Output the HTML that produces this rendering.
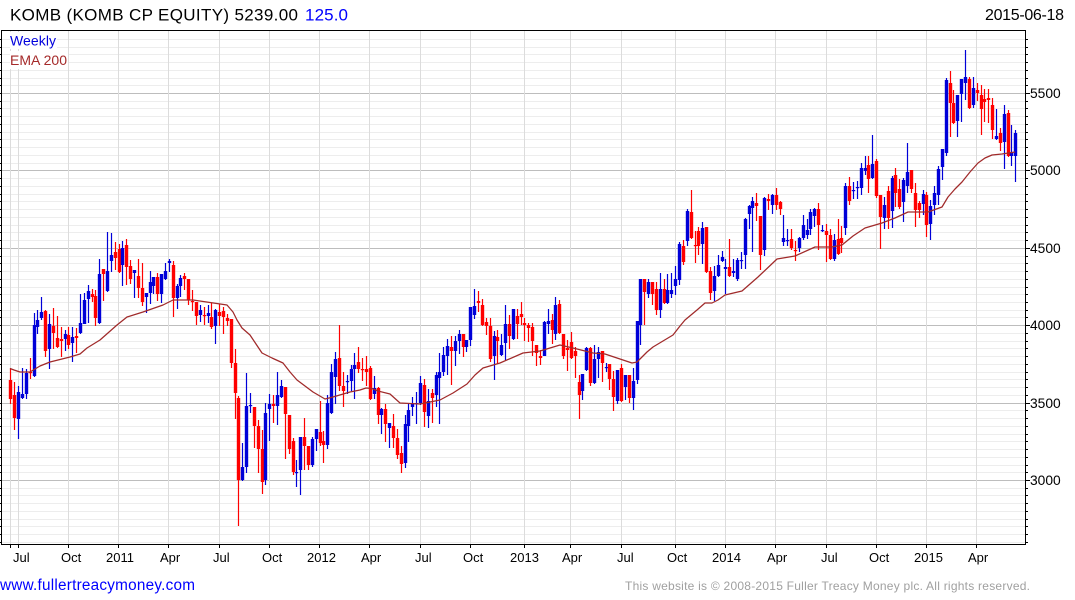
<!DOCTYPE html>
<html><head><meta charset="utf-8"><title>KOMB</title>
<style>
html,body{margin:0;padding:0;background:#fff;width:1075px;height:600px;overflow:hidden}
svg{display:block;position:absolute;left:0;top:0}
text{font-family:"Liberation Sans",Arial,sans-serif}
</style></head><body>
<svg id="s" xmlns="http://www.w3.org/2000/svg" width="1075" height="600" viewBox="0 0 1075 600">
<g id="grid"></g>
<g id="cand"></g>
<polyline fill="none" stroke="#a02a2a" stroke-width="1.25" stroke-linejoin="round" points="10,368.5 14,370 20,372 30,372 40,366 50,362 70,357 80,354 87,348 100,340 117,325 127,317 143,312 163,305 173,300 193,300 227,305 233,312 237,320 242,328 250,335 256,344 262,353 272,358 283,363 290,372 297,380 305,386 313,392 325,399 333,397 350,392 360,390 366,388 372,388.5 378,391 390,394 400,403 420,404 440,400 453,393 467,384 475,375 483,368 500,363 523,353 540,351 560,345 577,349 593,353 605,354 620,359 632,363 637,362 647,352 653,347 673,335 680,326 685,320 697,310 705,303 712,303 718,300 725,295 742,291 750,284 758,277 777,259 795,256 815,247 832,247 842,245 853,236 865,228 882,223 895,218 908,212 928,212 942,207 948,197 955,189 962,182 970,172 978,163 985,158 992,155 1002,154 1015,152"/>
<g id="frame" shape-rendering="crispEdges"></g>
<rect x="10" y="32" width="47" height="17" fill="#fff"/>
<rect x="10" y="51" width="58" height="18" fill="#fff"/>
<text x="10" y="45.5" font-size="14" fill="#0000dd" textLength="46">Weekly</text>
<text x="10" y="65" font-size="14" fill="#a52a2a" textLength="57">EMA 200</text>
<text x="10" y="20.5" font-size="17" fill="#000" textLength="288">KOMB (KOMB CP EQUITY) 5239.00</text>
<text x="305" y="20.5" font-size="17" fill="#0000ff" textLength="43">125.0</text>
<text x="985" y="20" font-size="16" fill="#000" textLength="79">2015-06-18</text>
<g font-size="13.8" fill="#000">
<text x="1030" y="98">5500</text><text x="1030" y="175">5000</text><text x="1030" y="253">4500</text><text x="1030" y="330">4000</text><text x="1030" y="408">3500</text><text x="1030" y="485">3000</text>
</g>
<g font-size="13" fill="#000">
<text x="13" y="562">Jul</text><text x="61" y="562">Oct</text><text x="106" y="562">2011</text><text x="160" y="562">Apr</text><text x="213" y="562">Jul</text><text x="262" y="562">Oct</text><text x="307" y="562">2012</text><text x="361" y="562">Apr</text><text x="415" y="562">Jul</text><text x="463" y="562">Oct</text><text x="510" y="562">2013</text><text x="562" y="562">Apr</text><text x="617" y="562">Jul</text><text x="667" y="562">Oct</text><text x="712" y="562">2014</text><text x="767" y="562">Apr</text><text x="821" y="562">Jul</text><text x="869" y="562">Oct</text><text x="914" y="562">2015</text><text x="968" y="562">Apr</text>
</g>
<text x="0" y="590" font-size="15.3" fill="#0000ff" textLength="195">www.fullertreacymoney.com</text>
<text x="625" y="590" font-size="12" fill="#a0a0a0" textLength="405">This website is © 2008-2015 Fuller Treacy Money plc. All rights reserved.</text>
</svg>
<script>
var NS="http://www.w3.org/2000/svg";
function R(p,x,y,w,h,c){var r=document.createElementNS(NS,"rect");r.setAttribute("x",x);r.setAttribute("y",y);r.setAttribute("width",w);r.setAttribute("height",h);r.setAttribute("fill",c);p.appendChild(r);}
var g=document.getElementById("grid"),f=document.getElementById("frame"),c=document.getElementById("cand");
var L=1,T=30,Rr=1025,B=544,k,y;
var minor=[];
for(k=-7;k<=58;k++){y=Math.round(93+k*7.74);minor.push(y);R(g,L,y,Rr-L,1,"#ededed");}
[93,170,248,325,403,480].forEach(function(y){R(g,L,y,Rr-L,1,"#bdbdbd");});
var vx=[10,18,68,118,168,219,269,319,369,420,470,524,570,621,675,725,775,826,876,926,976];
vx.forEach(function(x){R(g,x,T,1,B-T,"#dcdcdc");R(f,x,B,1,4,"#000");});
minor.forEach(function(y){R(f,0,y,1,1,"#000");R(f,Rr,y,3,1,"#000");});
[93,170,248,325,403,480].forEach(function(y){R(f,Rr,y,5,1,"#000");});
R(f,1,T,Rr-1,1,"#000");R(f,1,B,Rr-1,1,"#000");R(f,1,T,1,B-T+1,"#000");R(f,Rr,T,1,B-T+1,"#000");
var d="r368,380,399,404 r382,395,418,430 b386,392,419,439 b368,394,398,399 b369,373,394,399 r358,372,373,379 b313,325,376,377 b310,320,327,334 b297,312,318,320 r310,311,351,357 b314,324,349,369 r308,326,333,349 r316,338,347,348 r327,339,341,357 b330,334,339,351 r327,335,345,349 b327,337,343,362 r328,336,338,353 b294,323,333,334 b293,300,324,324 b285,291,299,323 r289,294,297,302 r290,296,318,326 b259,274,323,324 r269,269,274,301 b232,271,291,292 b233,255,261,272 r242,252,258,270 r244,249,272,273 b241,248,265,286 r239,245,267,285 r260,266,279,284 b270,270,273,298 r259,276,288,298 r263,288,302,306 b293,293,297,313 b271,282,293,304 b277,277,286,294 r273,277,294,301 b274,274,294,303 b263,271,279,280 b259,261,263,272 r261,265,298,317 b284,286,298,309 b275,278,286,297 r273,276,279,290 r279,279,300,305 r290,301,302,311 r302,302,316,325 b305,310,315,322 r307,315,316,325 b305,313,316,323 r303,317,327,329 b309,310,326,344 r304,312,316,326 r307,311,317,334 r314,318,321,326 r319,319,363,368 r349,363,393,419 r396,398,480,526 b443,467,480,481 b373,406,467,473 b393,405,406,413 r407,407,426,448 r420,426,449,473 r430,449,482,494 b403,413,480,485 b394,404,409,441 r395,404,406,423 b372,395,406,425 b380,386,397,398 r387,387,414,459 r415,415,449,454 r438,441,472,475 b460,472,473,487 b437,437,470,495 r418,437,446,470 r446,446,465,470 b437,439,465,467 b429,429,439,451 r401,432,443,446 r431,441,445,463 b395,403,445,449 b364,372,413,414 b352,359,377,404 r325,358,386,391 r372,386,391,407 b375,381,382,394 b365,369,381,391 b353,365,369,399 r347,362,369,373 r358,369,370,381 r356,369,372,386 r366,368,399,400 b376,388,394,399 r387,388,415,424 b408,409,415,434 r404,409,424,442 b423,423,428,448 r414,426,438,448 r429,438,455,459 r446,453,464,473 b415,424,463,468 b404,410,426,442 b397,403,407,416 b392,403,404,424 b376,383,403,405 r379,385,412,427 b389,401,416,428 r389,393,398,423 b372,375,395,407 b353,372,378,424 b347,355,372,376 b339,346,356,375 r336,347,351,385 b336,341,351,366 b330,334,341,354 r334,334,347,357 b340,340,347,352 b307,307,340,346 b289,306,315,319 r291,301,303,312 r299,305,325,326 r318,322,326,335 r318,326,359,362 b331,336,356,380 r330,337,341,364 b334,345,355,356 b305,324,343,360 r315,324,336,349 b309,309,339,340 r309,316,324,339 r302,314,317,325 r318,323,325,341 r323,325,328,342 r323,327,341,356 r345,345,353,366 r350,356,358,365 b321,322,356,356 b309,321,324,334 r314,320,330,344 b297,305,334,340 r300,304,333,334 r334,334,356,359 r340,348,350,371 r332,342,358,359 r347,351,356,378 r375,382,395,419 b374,374,391,400 b347,348,370,371 r347,348,383,386 b345,359,383,384 b347,352,359,378 r351,351,363,382 b363,367,368,372 r364,364,379,390 r371,379,397,411 b370,370,401,404 r364,368,401,402 b375,375,387,400 r375,375,398,403 b368,381,398,410 b321,321,380,384 b279,279,325,345 r279,279,292,325 b279,282,294,298 r282,282,294,305 r282,289,310,315 b273,289,310,318 r279,289,303,304 b274,290,303,304 b273,290,294,298 b266,279,286,295 b242,244,280,285 r240,246,262,265 b209,211,241,246 r190,212,238,239 r231,245,246,263 r227,231,246,255 b222,228,244,264 r227,227,272,273 r267,271,293,300 b266,276,291,301 b255,265,276,277 b251,257,261,262 b259,267,269,294 r239,267,276,277 b259,271,273,277 b258,260,279,281 b252,260,261,269 b218,219,255,269 b205,206,214,229 b197,201,208,252 r193,203,206,221 r216,216,255,270 b197,198,250,256 r194,199,201,210 b194,195,205,214 r188,195,205,210 r201,202,209,215 b215,238,242,246 b229,240,241,246 r229,239,248,250 r241,250,251,261 b237,238,248,252 b215,225,238,240 b219,230,235,239 b209,212,229,235 b208,209,216,227 r203,209,225,250 b225,230,231,232 r224,231,235,262 r229,235,259,260 b234,240,259,261 r219,239,254,255 r226,238,243,253 b183,186,228,235 r177,186,201,205 b182,190,191,199 b181,187,188,199 b163,168,188,195 b156,168,171,175 r156,165,179,193 b135,164,178,179 r159,161,196,198 r195,195,217,249 b197,205,218,229 r186,191,218,229 b176,178,211,228 r168,175,193,207 r179,189,207,209 b178,180,202,222 b143,172,186,193 r170,170,189,193 r183,193,210,227 r201,203,210,218 b190,194,204,215 r192,195,225,237 b200,206,224,240 b186,193,205,215 b166,169,195,205 b149,149,167,180 b78,80,153,156 r71,83,103,137 r90,103,123,124 b95,95,121,137 b79,79,94,122 b50,77,83,100 r77,79,108,109 b77,88,105,108 r83,90,93,101 r85,95,109,135 r89,99,102,122 r89,98,100,123 r98,105,130,139 b109,136,139,140 r128,133,143,151 b105,114,142,169 r110,113,156,157 b125,152,156,166 b130,133,156,182".split(" ");
d.forEach(function(s,i){
  var col=s[0]=="r"?"#ff0000":"#0000d8",v=s.slice(1).split(",").map(Number),x=Math.round(10.4+i*3.865);
  R(c,x-0.1,v[0],1.2,v[3]-v[0],col);
  R(c,x-1.2,v[1],3.4,Math.max(1.2,v[2]-v[1]),col);
});
</script>
</body></html>
